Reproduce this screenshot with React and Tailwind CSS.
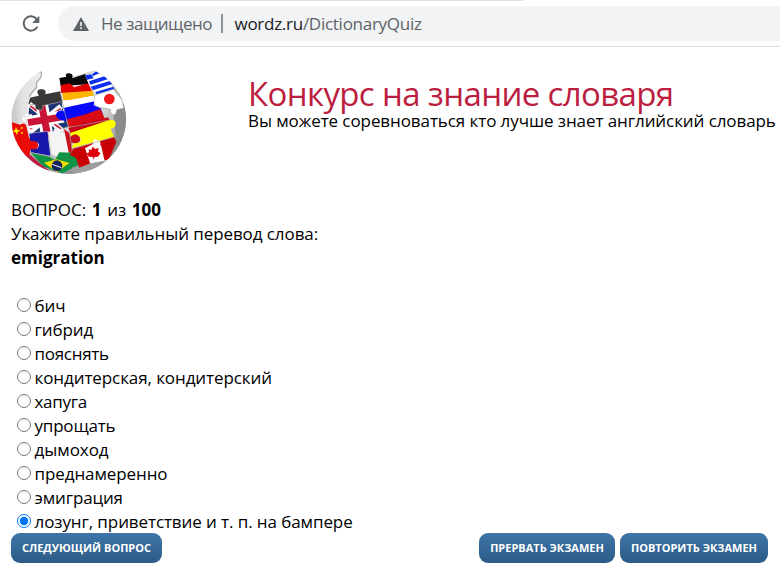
import { useState } from "react";

const OPTIONS = [
  ["бич", "tracking-[-0.1px]"],
  ["гибрид", "tracking-[-0.1px]"],
  ["пояснять", "tracking-[-0.28px]"],
  ["кондитерская, кондитерский", "tracking-[-0.09px]"],
  ["хапуга", "tracking-[-0.3px]"],
  ["упрощать", "tracking-[-0.2px]"],
  ["дымоход", "tracking-[-0.05px]"],
  ["преднамеренно", "tracking-[-0.09px]"],
  ["эмиграция", "tracking-[-0.15px]"],
  ["лозунг, приветствие и т. п. на бампере", "tracking-[-0.09px]"],
];

function Globe() {
  return (
    <svg className="block h-[125px] w-[140px]" viewBox="0 0 420 375">
      <defs>
        <radialGradient id="sphere" cx="0.35" cy="0.3" r="0.8">
          <stop offset="0" stopColor="#f4f4f4" />
          <stop offset="0.55" stopColor="#d2d2d2" />
          <stop offset="1" stopColor="#777" />
        </radialGradient>
        <linearGradient id="left" x1="0" y1="0" x2="1" y2="0">
          <stop offset="0" stopColor="#c0c0c0" />
          <stop offset="0.4" stopColor="#e2e2e2" />
          <stop offset="1" stopColor="#ececec" />
        </linearGradient>
        <clipPath id="ball">
          <ellipse cx="206" cy="178" rx="172" ry="164" />
        </clipPath>
      </defs>
      <g clipPath="url(#ball)" strokeLinejoin="round">
        <path d="M80 200L90 110L182 93L180 60L295 28L390 60V350H30V205Z" fill="url(#sphere)" />
        <path d="M30 30L120 33Q128 45 119 58Q106 68 110 82Q96 96 87 111L80 200L35 205Z" fill="url(#left)" />
        <path d="M112 36L123 35Q128 45 119 58Q106 68 110 82Q96 96 87 111" fill="none" stroke="#aaa" strokeWidth="4" />
        <path d="M340 160L385 120V260L330 320L315 255L347 235Z" fill="#8b8b8b" />
        {/* Germany */}
        <path d="M178 54L199 50Q193 39 209 40Q222 43 216 55L256 42L261 58L266 73L182 78Z" fill="#080808" />
        <path d="M182 76L210 70L222 82L265 70L276 94L235 107L183 98Z" fill="#e00000" />
        <path d="M187 98L278 92L281 107L250 113Q250 124 239 122L190 120Z" fill="#ffb400" />
        <path d="M90 113L117 107Q105 91 121 88Q141 86 136 103L181 94L188 129L140 138L85 133Z" fill="#383838" />
        {/* Greece */}
        <path d="M255 45L276 41Q280 31 292 34L300 42L324 48L343 91L288 101L268 76Z" fill="#fff" />
        <path d="M255 46L274 43L281 55L261 59ZM288 34L298 40L279 48L276 43ZM267 64L323 46L327 56L271 74ZM272 80L332 62L337 72L279 91ZM286 96L340 80L343 89L290 103Z" fill="#0b2fed" />
        {/* Japan */}
        <path d="M283 106L340 88L366 120L371 144L350 149Q350 165 339 164Q329 160 332 148L299 142Q280 139 283 126Z" fill="#fff" stroke="#aaa" strokeWidth="2" />
        <circle cx="328" cy="117" r="16" fill="#f0181e" />
        {/* Great Britain */}
        <path d="M88 135L184 125L190 155L205 199L180 211Q170 202 162 207L166 216L93 222L84 188Z" fill="#1d3475" />
        <path d="M88 132L185 211M183 139L88 217" stroke="#fff" strokeWidth="16" />
        <path d="M91 138L183 207M182 146L90 207" stroke="#cf203d" strokeWidth="5" />
        <path d="M126 136L143 235M82 188L190 169" stroke="#fff" strokeWidth="37" />
        <path d="M125 136L145 235M84 188L195 169" stroke="#c91435" strokeWidth="21" />
        <path d="M88 134L106 134Q103 150 119 150Q132 151 128 137L185 125" fill="#383838" stroke="#aaa" strokeWidth="2" />
        <path d="M75 165H94L88 174H69L75 184" fill="none" stroke="#fff" strokeWidth="5" />
        {/* Russia */}
        <path d="M188 122L236 121L250 113L280 107L285 130L192 151Z" fill="#fff" />
        <path d="M190 136L283 119L281 136L302 145L309 163L266 174L193 182Q169 179 168 164Q172 147 192 154Z" fill="#0808fa" />
        <path d="M188 123L281 108L284 124L190 144Z" fill="#fff" />
        <path d="M200 178L252 164L301 147L314 174L280 192L237 199L206 202Z" fill="#d90c15" />
        {/* Spain */}
        <path d="M205 203L240 195Q247 179 262 188L324 172L333 187L284 203L213 224Z" fill="#c6001a" />
        <path d="M210 219L326 181Q348 177 347 193Q343 207 331 206L342 230L284 246L213 265L223 248Q247 252 241 231Q225 219 216 232Z" fill="#ffff00" />
        {/* China */}
        <path d="M36 187L61 194Q77 184 80 203L87 234Q118 242 114 260Q105 275 91 270L88 290L62 292L38 250Z" fill="#e90b05" />
        <path d="M48 201L52 210L62 211L53 216L51 226L47 217L38 215L45 210Z" fill="#ffef00" />
        <circle cx="65" cy="204" r="3" fill="#ffdc00" />
        <circle cx="66" cy="219" r="3" fill="#ffdc00" />
        {/* France */}
        <path d="M88 221L142 214L151 287L93 277L92 267Q119 272 117 252Q109 241 91 243Z" fill="#1717aa" />
        <path d="M143 215L162 214Q158 202 174 204Q186 207 181 219L196 218L209 280L175 292L153 282Z" fill="#f4f4f4" />
        <path d="M192 207L209 220L212 231Q225 215 239 231Q245 249 225 250L214 248L217 272L207 281Z" fill="#c80d1b" />
        {/* Brazil */}
        <path d="M92 278L145 289L165 300L178 277L216 278L229 292L235 315L188 340L130 320Z" fill="#109344" />
        <path d="M132 308L170 298L209 309L170 336Z" fill="#f5dc00" />
        <circle cx="171" cy="317" r="16" fill="#14245e" />
        <path d="M157 313L184 323" stroke="#f5f5ff" strokeWidth="3" />
        {/* Canada */}
        <path d="M218 266L342 232L345 245L214 282Z" fill="#c80006" />
        <path d="M214 276L256 263L277 312L238 325L228 293L210 285Z" fill="#c80006" />
        <path d="M255 265L280 251Q276 235 292 240Q307 244 300 257L312 253L323 299L272 314Z" fill="#fff" />
        <path d="M301 246L342 231L349 245L325 302L313 299Z" fill="#c80006" />
        <path d="M278 260L286 267L296 264L294 275L302 279L294 290L283 291L282 300L278 291L266 290L260 280L268 277L266 268L274 270Z" fill="#df0008" />
        <path d="M217 321L237 323L272 310L322 301L293 328L220 341Z" fill="#9e9e9e" />
        <path d="M65 290L92 285L125 315L151 334H112Z" fill="#c21c42" />
        <g fill="none" stroke="#b0a7a7" strokeWidth="2">
          <path d="M180 94L188 129L205 201L217 272M88 220L144 214L153 284M190 204L238 197L326 180M213 267L342 231M92 278L151 289" />
        </g>
      </g>
    </svg>
  );
}

function Button({ children, className }) {
  return (
    <button
      className={
        "flex h-[30px] items-center justify-center rounded-[9px] bg-linear-to-b from-[#3e75a8] to-[#2b5b87] pb-px text-[11px] font-bold whitespace-nowrap text-white " +
        className
      }
    >
      {children}
    </button>
  );
}

export default function App() {
  const [picked, setPicked] = useState(9);
  return (
    <div className="flex h-[572px] w-[780px] flex-col overflow-hidden bg-white font-['Open_Sans','Noto_Sans',sans-serif] text-[17px] leading-6 text-black">
      <div className="h-px w-[523px] shrink-0 rounded-r bg-[#dee1e6]" />
      <header className="flex h-[46px] shrink-0 items-center border-b border-[#d9dadb] pl-[21px]">
        <svg className="h-[18px] w-[19px] shrink-0" viewBox="0 0 19 18">
          <path d="M15.7 4.1A7.2 7.2 0 1 0 16.4 11.6" fill="none" stroke="#5f6368" strokeWidth="2" />
          <path d="M18.3 0.8V8H11.1Z" fill="#5f6368" />
        </svg>
        <div className="ml-[18px] flex h-[35px] grow items-center rounded-l-full bg-[#f1f3f4] pl-[15px]">
          <svg className="h-[14px] w-4 shrink-0" viewBox="0 0 16 14">
            <path d="M8 0L16 14H0Z" fill="#5f6368" />
            <path d="M8 5V9M8 10.3V12" stroke="#f1f3f4" strokeWidth="1.6" />
          </svg>
          <span className="ml-3 w-[120px] tracking-[-0.45px] whitespace-nowrap text-[#5f6368]">Не защищено</span>
          <span className="h-[19px] w-[1.5px] bg-[#8f9296]" />
          <span className="ml-3 tracking-[-0.27px] whitespace-nowrap text-[#5f6368]">
            <span className="text-[#202124]">wordz.ru</span>/DictionaryQuiz
          </span>
        </div>
      </header>
      <div className="flex h-[151px] shrink-0 pt-[13px]">
        <Globe />
        <div className="ml-[108px] pt-[15px]">
          <h1 className="h-9 text-[33px] leading-[38px] tracking-[-0.63px] whitespace-nowrap text-[#bb1e3f]">Конкурс на знание словаря</h1>
          <p className="-mt-[2px] tracking-[-0.08px] whitespace-nowrap">Вы можете соревноваться кто лучше знает английский словарь</p>
        </div>
      </div>
      <main className="pl-[11px]">
        <p className="[word-spacing:1.2px]">
          ВОПРОС: <b>1</b> из <b>100</b>
        </p>
        <p className="tracking-[-0.08px]">Укажите правильный перевод слова:</p>
        <p className="font-bold">emigration</p>
        <div className="pt-6">
          {OPTIONS.map(([label, tracking], i) => (
            <label key={label} className="flex h-6 items-center pl-[6px]">
              <input
                type="radio"
                name="answer"
                className="mb-[3px] size-[14px]"
                checked={picked === i}
                onChange={() => setPicked(i)}
              />
              <span className={"ml-[3.5px] whitespace-nowrap " + tracking}>{label}</span>
            </label>
          ))}
        </div>
        <div className="-mt-px flex">
          <Button className="w-[151px]">СЛЕДУЮЩИЙ ВОПРОС</Button>
          <Button className="ml-[317px] w-[136px]">ПРЕРВАТЬ ЭКЗАМЕН</Button>
          <Button className="ml-[5px] w-[148px]">ПОВТОРИТЬ ЭКЗАМЕН</Button>
        </div>
      </main>
    </div>
  );
}
